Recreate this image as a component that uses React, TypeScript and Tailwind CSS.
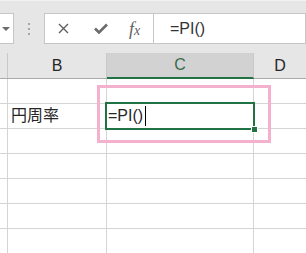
import React from "react";

const font = { fontFamily: '"Liberation Sans", "Noto Sans CJK JP", sans-serif' };

export default function App() {
    const rows = [0, 1, 2, 3, 4, 5, 6];

    return (
        <div className="relative w-[306px] h-[253px] overflow-hidden bg-white text-[#262626]" style={font}>
            {/* toolbar */}
            <div className="h-[53px] bg-[#e6e6e6] border-t border-[#f2f2f2] pt-[12px] flex items-start">
                {/* name box */}
                <div className="w-[14px] h-[31px] bg-white border border-l-0 border-[#c6c6c6] flex items-center pl-[2px]">
                    <div className="w-0 h-0 border-l-[4px] border-r-[4px] border-t-[4px] border-l-transparent border-r-transparent border-t-[#6b6b6b]" />
                </div>
                {/* grip dots */}
                <div className="ml-[14px] h-[31px] flex flex-col justify-center gap-[3px]">
                    <div className="w-[2px] h-[2px] bg-[#a6a6a6]" />
                    <div className="w-[2px] h-[2px] bg-[#a6a6a6]" />
                    <div className="w-[2px] h-[2px] bg-[#a6a6a6]" />
                </div>
                {/* formula buttons */}
                <div className="ml-[14px] w-[110px] h-[31px] bg-white border border-[#c6c6c6] flex items-center">
                    <svg className="ml-[13px]" width="11" height="11" viewBox="0 0 11 11">
                        <path d="M1 1 L10 10 M10 1 L1 10" stroke="#5f5f5f" strokeWidth="1.4" />
                    </svg>
                    <svg className="ml-[25px]" width="14" height="11" viewBox="0 0 14 11">
                        <path d="M1 5.5 L5 9.5 L13 1.5" stroke="#6b6b6b" strokeWidth="2.6" fill="none" />
                    </svg>
                    <span className="ml-[21px] text-[18px] italic text-[#5f5f5f] leading-none" style={{ fontFamily: '"Liberation Serif", serif' }}>
                        f<span className="text-[14px]">x</span>
                    </span>
                </div>
                {/* formula input */}
                <div className="flex-1 h-[31px] bg-white border border-l-0 border-[#c6c6c6] flex items-center pl-[16px] text-[16px] text-[#333]">
                    =PI()
                </div>
            </div>

            {/* column headers */}
            <div className="flex h-[26px] bg-[#e6e6e6] border-b border-[#ababab]">
                <div className="w-[8px] border-r border-[#c8c8c8]" />
                <div className="w-[99px] border-r border-[#c8c8c8] flex items-center justify-center text-[16px]">B</div>
                <div className="w-[147px] bg-[#d2d2d2] border-r border-[#c8c8c8] border-b-2 border-b-[#217346] -mb-px flex items-center justify-center text-[16px] text-[#3a6b4c]">C</div>
                <div className="flex-1 flex items-center justify-center text-[16px]">D</div>
            </div>

            {/* grid */}
            {rows.map((r) => (
                <div key={r} className="flex h-[25px] border-b border-[#d4d4d4]">
                    <div className="w-[8px] border-r border-[#d4d4d4]" />
                    <div className="w-[99px] border-r border-[#d4d4d4] flex items-center pl-[3px] text-[16px]">
                        {r === 1 ? "円周率" : ""}
                    </div>
                    <div className="w-[147px] border-r border-[#d4d4d4]" />
                    <div className="flex-1" />
                </div>
            ))}

            {/* active cell */}
            <div className="absolute left-[105px] top-[102px] w-[150px] h-[28px] border-2 border-[#217346] bg-white flex items-center pl-[1px] text-[16px] text-[#262626]">
                =PI()
                <div className="ml-[2px] w-px h-[20px] bg-black" />
            </div>
            <div className="absolute left-[251px] top-[126px] w-[7px] h-[7px] bg-[#217346] border border-white" />

            {/* highlight */}
            <div className="absolute left-[97px] top-[85px] w-[174px] h-[58px] border-[3px] border-[#f4b1cd]" />
        </div>
    );
}
